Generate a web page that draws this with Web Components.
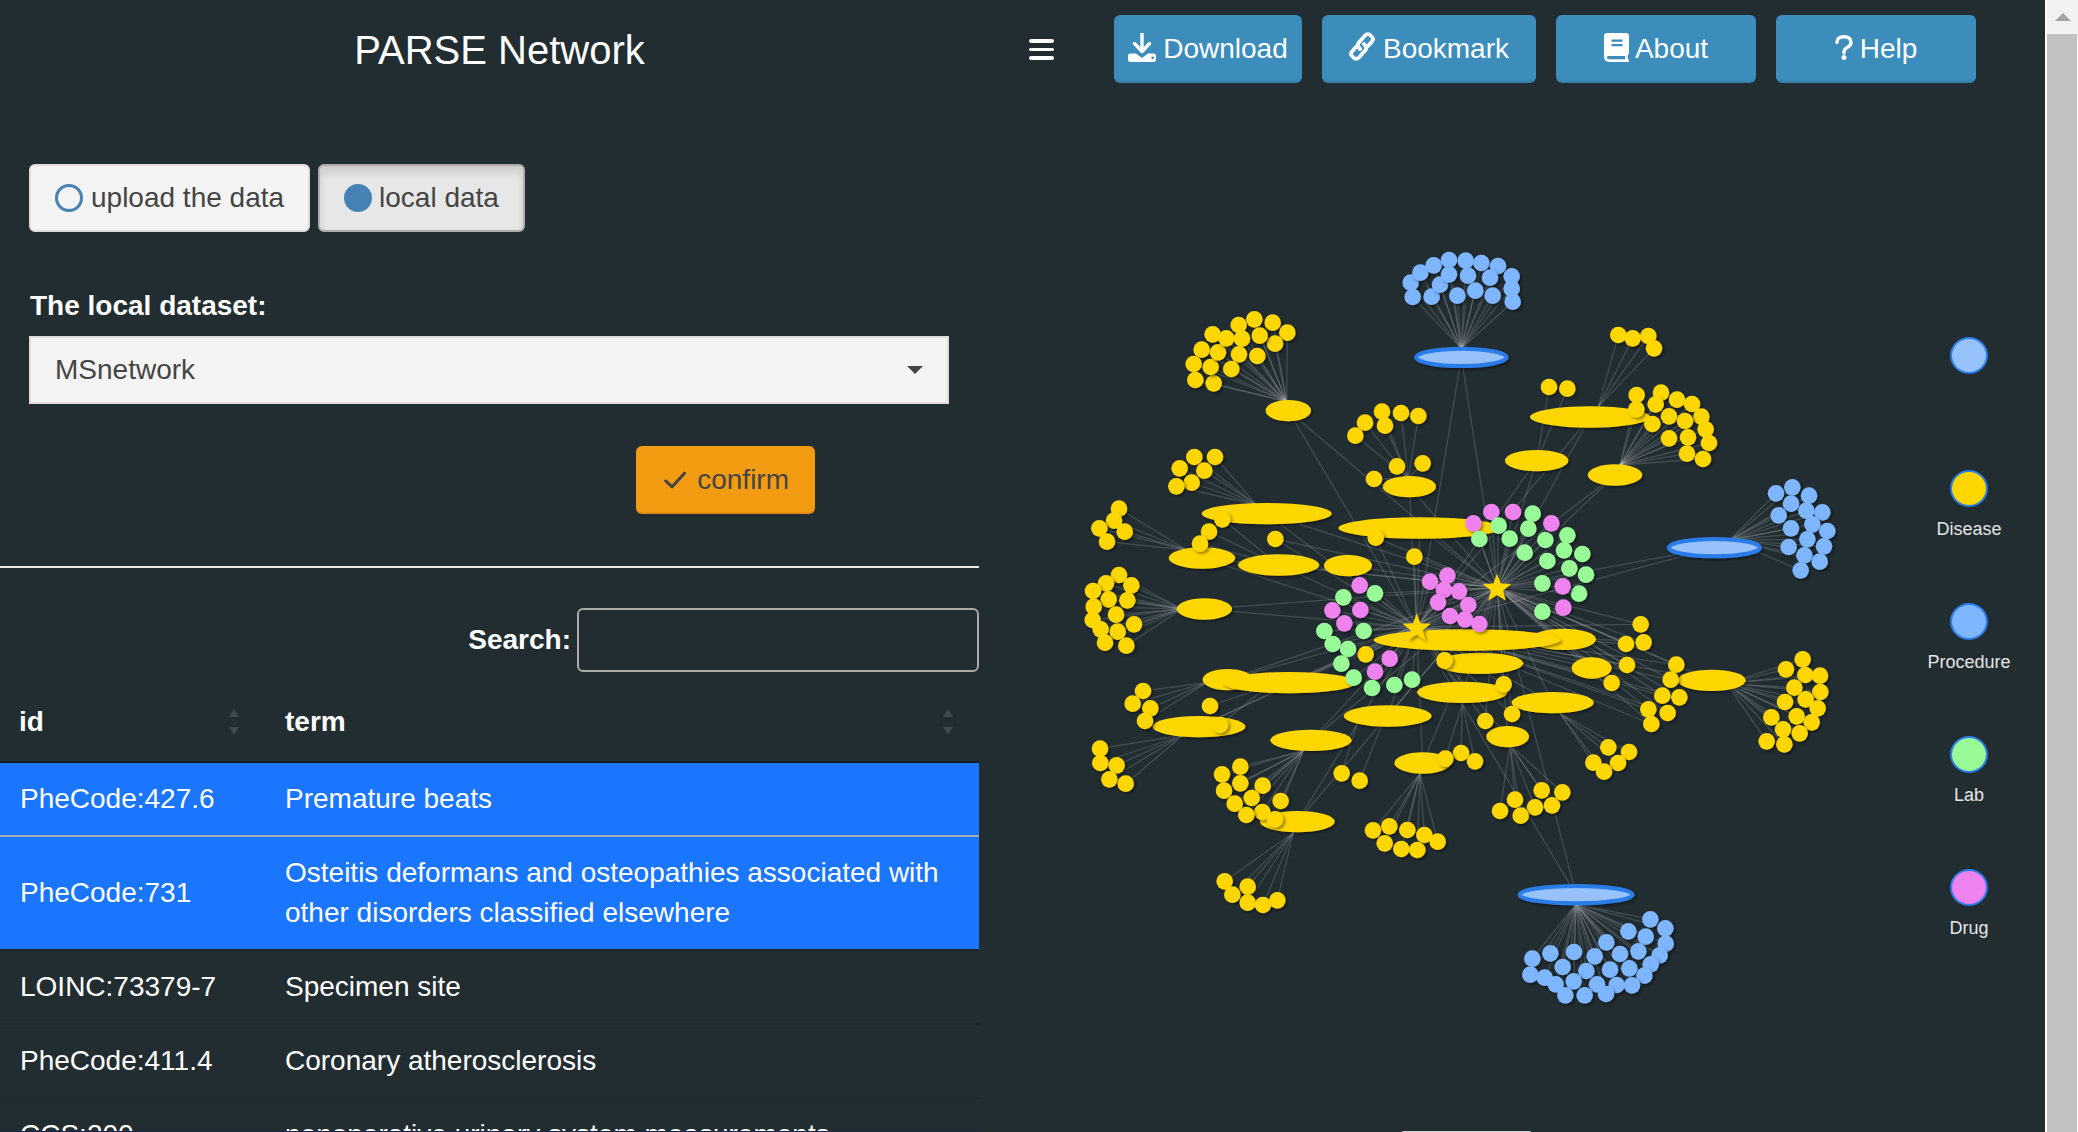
<!DOCTYPE html>
<html>
<head>
<meta charset="utf-8">
<title>PARSE Network</title>
<style>
  html, body { margin: 0; height: 100%; overflow: hidden; background: #222d32; }
  body { font-family: "Liberation Sans", Arial, sans-serif; font-size: 28px; line-height: 40px; color: #fff; }
</style>
</head>
<body>
<parse-app>
  <side-panel slot="side">
    <app-title>PARSE Network</app-title>
    <radio-group>
      <radio-button>upload the data</radio-button>
      <radio-button active>local data</radio-button>
    </radio-group>
    <select-box label="The local dataset:">MSnetwork</select-box>
    <confirm-button>confirm</confirm-button>
    <result-table>
      <result-row selected><span slot="id">PheCode:427.6</span>Premature beats</result-row>
      <result-row selected divider><span slot="id">PheCode:731</span>Osteitis deformans and osteopathies associated with other disorders classified elsewhere</result-row>
      <result-row><span slot="id">LOINC:73379-7</span>Specimen site</result-row>
      <result-row><span slot="id">PheCode:411.4</span>Coronary atherosclerosis</result-row>
      <result-row><span slot="id">CCS:200</span>nonoperative urinary system measurements</result-row>
    </result-table>
  </side-panel>
  <network-panel slot="main">
    <top-bar>
      <menu-toggle></menu-toggle>
      <action-button style="--w:188px">
        <svg slot="icon" width="28" height="29" viewBox="0 0 28 29"><path d="M14 0v17" stroke="#fff" stroke-width="3.4" fill="none"/><path d="M6.5 10.5 14 18.5l7.5-8" stroke="#fff" stroke-width="3.4" fill="none" stroke-linecap="round" stroke-linejoin="round"/><path fill="#fff" fill-rule="evenodd" d="M2.5 20.5H8l6 4.6 6-4.6h5.5A2.5 2.5 0 0 1 28 23v3.5a2.5 2.5 0 0 1-2.5 2.5h-23A2.5 2.5 0 0 1 0 26.500V23a2.500 2.500 0 0 1 2.500-2.500zM24.700 23.600a1.300 1.300 0 1 0 0 2.600a1.300 1.300 0 1 0 0-2.600z"/></svg>
        Download
      </action-button>
      <action-button style="--w:214px">
        <svg slot="icon" style="margin:-5px 1px 0 0" width="26" height="29" viewBox="0 0 26 29" fill="none" stroke="#fff" stroke-width="3.800" stroke-linecap="round"><path d="M11 17 9.500 15Q8 13 9.500 11L16 3.500Q18 1.500 20.500 2.500L23 5Q25 7 23 9.500L19 14"/><path d="M15 12 16.500 14Q18 16 16.500 18L10 25.500Q8 27.500 5.500 26.500L3 24Q1 22 3 19.500L7 15"/></svg>
        Bookmark
      </action-button>
      <action-button style="--w:200px">
        <svg slot="icon" style="margin-right:-1px" width="25" height="29" viewBox="0 0 25 29"><path fill="#fff" d="M3 0H22a3 3 0 0 1 3 3V20a2 2 0 0 1-1 1.500q-.8 2.200 0 4.400q1 .5 1 1.600a1.500 1.500 0 0 1-1.500 1.500H5a5 5 0 0 1-5-5V3a3 3 0 0 1 3-3z"/><path fill="#3c8dbc" d="M7.500 6.500h11v2.200h-11zM7.500 11h11v2.200h-11zM4.500 23h16.800q-.4 1.600 0 3.200H4.500a1.600 1.600 0 0 1 0-3.200z"/></svg>
        About
      </action-button>
      <action-button style="--w:200px">
        <svg slot="icon" width="18" height="25" viewBox="0 0 18 25"><path d="M2 7.500Q2 1.700 9 1.700T16 7.500Q16 10.500 12.500 12.300Q9 14 9 17V18" fill="none" stroke="#fff" stroke-width="3.400" stroke-linecap="round"/><circle cx="9" cy="22.500" r="2.500" fill="#fff"/></svg>
        Help
      </action-button>
    </top-bar>
    <graph-row>
      <network-graph></network-graph>
      <network-legend>
        <legend-item color="#97c2fc"></legend-item>
        <legend-item color="#ffd700">Disease</legend-item>
        <legend-item color="#7eb6ff">Procedure</legend-item>
        <legend-item color="#98fb98">Lab</legend-item>
        <legend-item color="#ee82ee">Drug</legend-item>
      </network-legend>
    </graph-row>
  </network-panel>
  <page-scrollbar slot="bar"></page-scrollbar>
</parse-app>

<script>
class Shadowed extends HTMLElement {
  constructor(html) {
    super();
    this.attachShadow({ mode: "open" }).innerHTML = html;
  }
}

customElements.define("parse-app", class extends Shadowed {
  constructor() {
    super(`<style>
      :host { display: flex; height: 1132px; overflow: hidden; position: relative; }
      .side { display: block; width: 979px; flex: none; }
      .main { display: block; flex: 1; min-width: 0; }
      .edge { position: absolute; left: 0; bottom: 0; width: 979px; height: 1px; background: #18264a; }
    </style>
    <slot class="side" name="side"></slot><slot class="main" name="main"></slot><slot name="bar"></slot>
    <div class="edge"></div>`);
  }
});

customElements.define("side-panel", class extends Shadowed {
  constructor() {
    super(`<style>:host { display: flex; flex-direction: column; width: 979px; }</style><slot></slot>`);
  }
});

customElements.define("app-title", class extends Shadowed {
  constructor() {
    super(`<style>
      :host { display: block; height: 100px; line-height: 100px; padding-left: 20px; text-align: center; font-size: 40px; color: #fff; }
    </style><slot></slot>`);
  }
});

customElements.define("radio-group", class extends Shadowed {
  constructor() {
    super(`<style>:host { display: flex; gap: 8px; padding: 64px 0 0 29px; }</style><slot></slot>`);
  }
});

customElements.define("radio-button", class extends Shadowed {
  constructor() {
    super(`<style>
      :host {
        display: flex; align-items: center; gap: 8px; box-sizing: border-box; height: 68px; padding: 0 24px;
        background: #f4f4f4; border: 2px solid #ddd; border-radius: 6px; color: #444;
      }
      :host([active]) { gap: 7px; background: #e7e7e7; border-color: #adadad; box-shadow: inset 0 6px 10px rgba(0,0,0,.125); }
      i { box-sizing: border-box; width: 28px; height: 28px; border-radius: 50%; border: 3px solid #4682b4; }
      :host([active]) i { background: #4682b4; }
    </style><i></i><slot></slot>`);
  }
});

customElements.define("select-box", class extends Shadowed {
  constructor() {
    super(`<style>
      :host { display: block; margin: 54px 0 0 29px; width: 920px; }
      label { display: block; font-weight: bold; color: #fff; margin-bottom: 10px; padding-left: 1px; }
      .box {
        display: flex; align-items: center; justify-content: space-between; box-sizing: border-box; height: 68px;
        padding: 0 24px 0 24px; background: #f4f4f4; border: 2px solid #ddd; color: #444;
      }
      .caret { width: 0; height: 0; border: 8px solid transparent; border-top-color: #444; border-bottom: 0; }
    </style><label></label><div class="box"><span><slot></slot></span><span class="caret"></span></div>`);
    this.shadowRoot.querySelector("label").textContent = this.getAttribute("label");
  }
});

customElements.define("confirm-button", class extends Shadowed {
  constructor() {
    super(`<style>
      :host {
        display: flex; align-items: center; gap: 11px; box-sizing: border-box; width: 179px; height: 68px; margin: 42px 0 52px 636px;
        padding: 0 24px 0 26px; background: #f39c12; border: 2px solid #f39c12; border-bottom-color: #e08e0b; border-radius: 6px; color: #444;
      }
    </style>
    <svg width="26" height="20" viewBox="0 0 26 20" fill="none" stroke="#444" stroke-width="3.600" stroke-linecap="round" stroke-linejoin="round"><path d="M2 11l7.500 7L24 2"/></svg>
    <slot></slot>`);
  }
});

customElements.define("result-table", class extends Shadowed {
  constructor() {
    const arrows = `<svg width="10" height="26" viewBox="0 0 10 26" fill="#3d4a50"><path d="M5 0l5 8H0zM5 26l5-8H0z"/></svg>`;
    super(`<style>
      :host { display: block; border-top: 2px solid #e8e8e8; }
      .search { display: flex; justify-content: flex-end; align-items: center; gap: 6px; height: 64px; margin-top: 40px; font-weight: bold; }
      .search input { box-sizing: border-box; width: 402px; height: 64px; background: transparent; border: 2px solid #aaa; border-radius: 6px; }
      .head { display: grid; grid-template-columns: 265px 1fr; height: 91px; box-sizing: border-box; border-bottom: 2px solid #141b1e; font-weight: bold; }
      .head div { display: flex; justify-content: space-between; align-items: center; padding: 10px 26px 0 20px; }
      .head div:first-child { padding-left: 19px; }
    </style>
    <div class="search">Search:<input type="text"></div>
    <div class="head"><div>id ${arrows}</div><div>term ${arrows}</div></div>
    <slot></slot>`);
  }
});

customElements.define("result-row", class extends Shadowed {
  constructor() {
    super(`<style>
      :host { display: grid; grid-template-columns: 265px 1fr; align-items: center; border-top: 2px solid #1e282c; color: #fff; }
      :host(:first-child) { border-top: 0; }
      :host([selected]) { background: #1a75ff; }
      :host([divider]) { border-top-color: #a5aebd; }
      div { padding: 16px 20px; }
      div:first-child { padding-left: 19px; }
    </style><div><slot name="id"></slot></div><div><slot></slot></div>`);
  }
});

customElements.define("network-panel", class extends Shadowed {
  constructor() {
    super(`<style>:host { display: flex; flex-direction: column; height: 1132px; }</style><slot></slot>`);
  }
});

customElements.define("top-bar", class extends Shadowed {
  constructor() {
    super(`<style>:host { display: flex; gap: 20px; box-sizing: border-box; height: 100px; padding: 15px 0 0 50px; flex: none; }</style><slot></slot>`);
  }
});

customElements.define("menu-toggle", class extends Shadowed {
  constructor() {
    super(`<style>
      :host { display: flex; flex-direction: column; gap: 5px; width: 25px; margin: 24px 40px 0 0; height: 21px; }
      i { display: block; height: 3.500px; background: #fff; border-radius: 2px; }
    </style><i></i><i></i><i></i>`);
  }
});

customElements.define("action-button", class extends Shadowed {
  constructor() {
    super(`<style>
      :host {
        display: flex; align-items: center; justify-content: center; gap: 7px; box-sizing: border-box;
        width: var(--w); height: 68px; background: #3c8dbc; border: 2px solid #3c8dbc; border-bottom-color: #367fa9; border-radius: 6px; color: #fff;
      }
      ::slotted(svg) { display: block; margin-top: -3px; }
    </style><slot name="icon"></slot><slot></slot>`);
  }
});

customElements.define("graph-row", class extends Shadowed {
  constructor() {
    super(`<style>:host { display: flex; flex: 1; min-height: 0; }</style><slot></slot>`);
  }
});

// coordinates were read off 3x crops of the picture, one origin per crop
const NW = [1080, 230], NE = [1500, 230], SW = [1080, 540], SE = [1500, 540];
const at = (o, p) => [o[0] + p[0] / 3, o[1] + p[1] / 3];

const YELLOW = "#ffd700", BLUE = "#7eb6ff", GREEN = "#98fb98", PINK = "#ee82ee";
const STAR_A = at(SW, [1010, 262]), STAR_B = at(SW, [1251, 143]);

// hub ellipses, drawn in this order: origin, x, y, rx, blue
const HUBS = [
  [NW, 625, 542, 68], [NW, 988, 770, 80], [NW, 560, 851, 195], [NW, 1020, 894, 245],
  [NE, 110, 692, 95], [NE, 345, 735, 82], [NE, 270, 561, 180],
  [SW, 366, 54, 100], [SW, 596, 75, 122], [SW, 804, 77, 72], [SW, 373, 207, 83],
  [SW, 443, 419, 75], [SW, 628, 428, 200], [SW, 357, 560, 139], [SW, 652, 845, 112],
  [SW, 693, 601, 122], [SW, 923, 528, 132], [SW, 1147, 457, 136], [SW, 1200, 370, 130],
  [SE, 190, 298, 98], [SW, 1161, 300, 280], [SW, 1028, 669, 85], [SW, 1283, 590, 64],
  [SE, 158, 488, 123], [SE, 275, 384, 60], [SE, 635, 421, 102],
  [NW, 1144, 382, 134, true], [NE, 643, 953, 135, true], [SE, 228, 1064, 168, true],
];

// satellites fanned out of one point on a hub
const FANS = [
  [NW, [1144, 356], BLUE, [[992,158],[1021,128],[1061,106],[1107,90],[1157,92],[1204,99],[1254,108],[1295,139],[1295,176],[1298,215],[998,201],[1055,200],[1080,164],[1107,133],[1164,137],[1230,143],[1132,197],[1186,182],[1238,197]]],
  [NW, [620, 515], YELLOW, [[398,313],[365,359],[341,402],[346,450],[401,460],[392,411],[414,367],[439,325],[476,285],[523,268],[578,278],[622,308],[585,341],[539,317],[486,326],[477,373],[532,378],[454,417]]],
  [NW, [985, 745], YELLOW, [[906,545],[963,549],[1015,558],[855,578],[915,587],[826,617],[951,709],[1028,700],[882,747]]],
  [NW, [530, 825], YELLOW, [[343,681],[405,681],[299,715],[373,722],[335,758],[289,769]]],
  [NW, [320, 960], YELLOW, [[117,836],[102,872],[134,905],[58,895],[81,935]]],
  [NW, [596, 1005], YELLOW, [[427,868],[387,905],[360,941]]],
  [SW, [305, 207], YELLOW, [[117,105],[78,130],[154,136],[39,153],[86,178],[142,181],[41,200],[108,224],[38,240],[162,253],[62,268],[113,275],[75,308],[139,317]]],
  [SW, [380, 428], YELLOW, [[189,453],[158,491],[211,505],[195,543]]],
  [SW, [560, 440], YELLOW, [[390,498],[420,555]]],
  [SW, [310, 585], YELLOW, [[60,626],[61,669],[110,676],[88,718],[137,731]]],
  [SW, [670, 632], YELLOW, [[481,680],[426,703],[548,737],[481,730],[432,752],[515,774],[602,783],[464,791],[547,816],[499,825],[585,838]]],
  [SW, [830, 555], YELLOW, [[785,700]]],
  [SW, [905, 555], YELLOW, [[839,722]]],
  [SW, [1020, 700], YELLOW, [[879,871],[928,859],[982,870],[1033,885],[1073,905],[914,910],[964,927],[1012,930]]],
  [SW, [640, 878], YELLOW, [[434,1024],[503,1040],[457,1064],[503,1088],[549,1095],[592,1081]]],
  [SW, [1147, 490], YELLOW, [[1143,639],[1185,664],[1096,656]]],
  [NE, [295, 530], YELLOW, [[355,315],[398,325],[445,318],[462,355]]],
  [NE, [115, 665], YELLOW, [[147,471]]],
  [NE, [122, 665], YELLOW, [[202,476]]],
  [NE, [360, 705], YELLOW, [[410,495],[483,488],[467,523],[531,509],[576,522],[409,538],[604,560],[507,559],[555,573],[457,582],[617,598],[507,625],[564,622],[627,639],[561,671],[609,687]]],
  [NE, [690, 930], BLUE, [[828,790],[877,772],[927,797],[873,821],[836,856],[919,842],[967,847],[873,895],[937,883],[982,903],[866,951],[922,928],[972,949],[913,976],[959,995],[902,1021]]],
  [SE, [228, 1092], BLUE, [[451,1138],[496,1165],[385,1174],[437,1190],[497,1211],[319,1207],[479,1246],[415,1234],[360,1242],[222,1236],[284,1249],[151,1240],[97,1256],[188,1281],[259,1293],[330,1289],[388,1285],[452,1273],[433,1307],[91,1304],[134,1313],[167,1333],[221,1324],[291,1333],[350,1335],[396,1336],[196,1366],[254,1366],[318,1362]]],
  [SE, [680, 430], YELLOW, [[908,358],[858,388],[916,405],[960,407],[883,443],[961,456],[855,486],[917,478],[953,505],[814,532],[890,529],[935,547],[849,568],[899,580],[800,604],[853,613]]],
  [SE, [180, 520], YELLOW, [[325,622],[387,636],[354,669],[280,668],[312,695]]],
  [SE, [30, 615], YELLOW, [[125,751],[105,802],[156,796],[187,757],[45,779],[0,813],[62,827]]],
];

// nodes tied straight to the two starred nodes: origin, colour, star list, points
const SPOKES = [
  [NW, YELLOW, [STAR_A, STAR_B], [[586,927],[887,923]]],
  [SW, YELLOW, [STAR_A, STAR_B], [[1003,50],[857,343],[1094,361],[1271,433],[1216,543],[1296,522]]],
  [SE, YELLOW, [STAR_A, STAR_B], [[422,253],[378,312],[431,307],[381,375],[335,429],[529,374],[512,419],[487,467],[538,472],[445,508],[503,519],[454,552]]],
  [SW, PINK, [STAR_A], [[839,136],[757,211],[841,210],[793,250],[929,356],[885,395]]],
  [SW, PINK, [STAR_A, STAR_B], [[1050,125],[1102,107],[1092,150],[1137,154],[1074,187],[1165,195],[1110,228],[1155,238],[1198,252]]],
  [SW, GREEN, [STAR_A], [[790,172],[733,273],[851,273],[758,312],[804,327],[784,371],[821,413],[876,444],[943,435],[996,419]]],
  [SW, GREEN, [STAR_B], [[885,160]]],
  [NW, PINK, [STAR_B], [[1234,846],[1299,846],[1180,880]]],
  [NW, GREEN, [STAR_B], [[1256,887],[1198,927],[1289,926]]],
  [NE, GREEN, [STAR_B], [[98,851],[85,896],[136,930],[202,916],[74,968],[192,961],[247,972],[142,993]]],
  [NE, PINK, [STAR_B], [[154,880]]],
  [SE, GREEN, [STAR_B], [[208,85],[258,104],[127,130],[237,161],[127,215]]],
  [SE, PINK, [STAR_B], [[188,139],[190,203]]],
];

function starPoints(cx, cy, r) {
  const pts = [];
  for (let i = 0; i < 10; i++) {
    const a = -Math.PI / 2 + i * Math.PI / 5, d = i % 2 ? r * 0.42 : r;
    pts.push((cx + d * Math.cos(a)).toFixed(1) + "," + (cy + d * Math.sin(a)).toFixed(1));
  }
  return pts.join(" ");
}

customElements.define("network-graph", class extends Shadowed {
  constructor() {
    let edges = "", hubs = "", nodes = "";
    const line = (a, b) => { edges += `<line x1="${a[0]}" y1="${a[1]}" x2="${b[0]}" y2="${b[1]}"/>`; };
    const dot = (p, c) => { nodes += `<circle cx="${p[0]}" cy="${p[1]}" r="8.300" fill="${c}" filter="url(#soft)"/>`; };

    HUBS.forEach(([o, x, y, rx, blue]) => {
      const c = at(o, [x, y]);
      line(c, STAR_A);
      line(c, STAR_B);
      hubs += blue
        ? `<ellipse cx="${c[0]}" cy="${c[1]}" rx="${rx / 3 + .500}" ry="8.700" fill="#97c2fc" stroke="#2b7ce9" stroke-width="4" filter="url(#soft)"/>`
        : `<ellipse cx="${c[0]}" cy="${c[1]}" rx="${rx / 3}" ry="10.700" fill="${YELLOW}" filter="url(#soft)"/>`;
    });
    FANS.forEach(([o, hub, color, pts]) => {
      pts.forEach(p => {
        const c = at(o, p);
        line(c, at(o, hub));
        dot(c, color);
      });
    });
    SPOKES.forEach(([o, color, stars, pts]) => {
      pts.forEach(p => {
        const c = at(o, p);
        stars.forEach(s => line(c, s));
        dot(c, color);
      });
    });
    const stars = [STAR_A, STAR_B].map(s =>
      `<polygon points="${starPoints(s[0], s[1] + 1, 15)}" fill="${YELLOW}" filter="url(#soft)"/>`).join("");

    super(`<style>
      :host { display: block; width: 921px; flex: none; }
      svg { display: block; }
      .edges line { stroke: rgba(255,255,255,.15); stroke-width: 1.300; }
    </style>
    <svg width="921" height="1032" viewBox="979 100 921 1032">
      <defs><filter id="soft" x="-30%" y="-50%" width="170%" height="220%"><feDropShadow dx="1.800" dy="1.800" stdDeviation="1.800" flood-color="#000" flood-opacity=".45"/></filter></defs>
      <g class="edges">${edges}</g>${hubs}${nodes}${stars}
      <path d="M1402 1132v-.5q0-.5 2-.5h125q2 0 2 .5v.5z" fill="#cfd3d6"/>
    </svg>`);
  }
});

customElements.define("network-legend", class extends Shadowed {
  constructor() {
    super(`<style>:host { display: flex; flex-direction: column; width: 138px; padding-top: 237px; flex: none; }</style><slot></slot>`);
  }
});

customElements.define("legend-item", class extends Shadowed {
  constructor() {
    super(`<style>
      :host { display: flex; flex-direction: column; align-items: center; height: 133px; font-size: 18px; line-height: 20px; color: #e4e4e4; }
      i { box-sizing: border-box; width: 38px; height: 37px; border-radius: 50%; border: 2.500px solid #2b7ce9; margin-bottom: 12px; }
    </style><i></i><slot></slot>`);
    this.shadowRoot.querySelector("i").style.background = this.getAttribute("color");
  }
});

customElements.define("page-scrollbar", class extends Shadowed {
  constructor() {
    super(`<style>
      :host { display: flex; flex-direction: column; box-sizing: border-box; width: 33px; height: 1132px; border-left: 2px solid #fff; background: #f1f1f1; flex: none; }
      .up { display: flex; align-items: center; justify-content: center; height: 34px; flex: none; }
      .up i { width: 0; height: 0; border: 8px solid transparent; border-bottom-color: #a3a3a3; border-top: 0; }
      .thumb { flex: 1; margin-right: 1px; background: #c1c1c1; }
    </style><div class="up"><i></i></div><div class="thumb"></div>`);
  }
});
</script>
</body>
</html>
